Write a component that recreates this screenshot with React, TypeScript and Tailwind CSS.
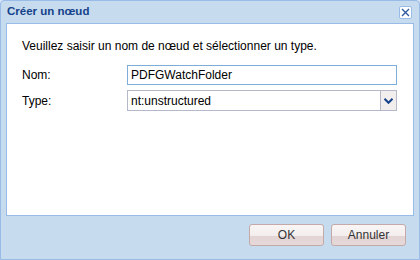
import React from 'react';

const font = { fontFamily: '"Liberation Sans", Arial, sans-serif' };

const DialogButton: React.FC<{ label: string }> = ({ label }) => {
  return (
    <button className="w-[75px] h-[22px] rounded-[3px] border border-[#c5a9a9] bg-[linear-gradient(#faf6f6_0%,#f3eded_55%,#e3d4d4_56%,#e6d9d9_100%)] text-[12px] text-[#333] leading-none">
      {label}
    </button>
  );
};

export default function App() {
  return (
    <div className="w-[420px] h-[260px] bg-[#dfe8f6]" style={font}>
      <div className="w-full h-full flex flex-col border border-[#99bbe8] rounded-t-[4px] bg-[#c6dcee] px-[5px]">
        {/* Title bar */}
        <div className="h-[22px] flex items-center justify-between pl-[1px] pr-[2px]">
          <span className="text-[11.5px] font-bold text-[#15428b]">Créer un nœud</span>
          <div className="w-[13px] h-[13px] rounded-[2px] border border-[#99bbe8] bg-white flex items-center justify-center">
            <svg width="9" height="9" viewBox="0 0 9 9">
              <path d="M1 1 L8 8 M8 1 L1 8" stroke="#2f5aa0" strokeWidth="1.4" />
            </svg>
          </div>
        </div>

        {/* Body */}
        <div className="flex-1 border border-[#99bbe8] bg-white px-[15px] pt-[15px] text-[12px] text-black">
          <p className="leading-[15px]">Veuillez saisir un nom de nœud et sélectionner un type.</p>
          <div className="mt-[11px] flex items-center">
            <label className="w-[105px]">Nom:</label>
            <input
              className="w-[270px] h-[20px] border border-[#7eadd9] bg-white px-[3px] text-[12px] outline-none"
              defaultValue="PDFGWatchFolder"
              style={font}
            />
          </div>
          <div className="mt-[5px] flex items-center">
            <label className="w-[105px]">Type:</label>
            <div className="w-[270px] h-[21px] flex border border-[#b5b8c8]">
              <div className="flex-1 px-[3px] flex items-center">nt:unstructured</div>
              <div className="w-[16px] border-l border-[#b5b8c8] bg-[#f3eeee] flex items-center justify-center">
                <svg width="9" height="6" viewBox="0 0 9 6">
                  <path d="M0.5 0.8 L4.5 4.8 L8.5 0.8" stroke="#15428b" strokeWidth="2" fill="none" />
                </svg>
              </div>
            </div>
          </div>
        </div>

        {/* Footer */}
        <div className="h-[43px] flex items-start justify-end gap-[7px] pt-[8px] pr-[8px]">
          <DialogButton label="OK" />
          <DialogButton label="Annuler" />
        </div>
      </div>
    </div>
  );
}
